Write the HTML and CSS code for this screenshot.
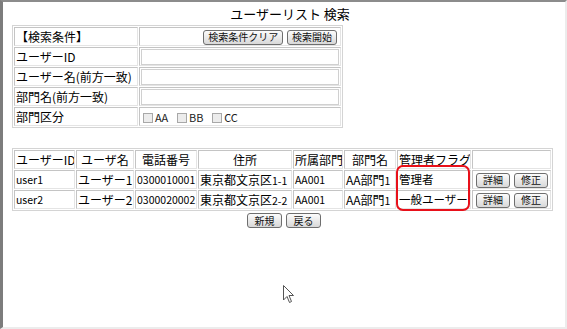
FILE: index.html
```html
<!DOCTYPE html>
<html lang="ja">
<head>
  <meta charset="UTF-8">
  <title>ユーザーリスト 検索</title>
  <link rel="stylesheet" href="styles.css">
</head>
<body>
  <div class="window">
    <h1 class="title">ユーザーリスト 検索</h1>

    <table class="grid search">
      <tr>
        <td class="label">【検索条件】</td>
        <td class="actions">
          <button class="btn">検索条件クリア</button>
          <button class="btn">検索開始</button>
        </td>
      </tr>
      <tr>
        <td class="label">ユーザーID</td>
        <td><input class="field" type="text"></td>
      </tr>
      <tr>
        <td class="label">ユーザー名(前方一致)</td>
        <td><input class="field" type="text"></td>
      </tr>
      <tr>
        <td class="label">部門名(前方一致)</td>
        <td><input class="field" type="text"></td>
      </tr>
      <tr>
        <td class="label">部門区分</td>
        <td class="checks">
          <label><span class="box"></span>AA</label>
          <label><span class="box"></span>BB</label>
          <label><span class="box"></span>CC</label>
        </td>
      </tr>
    </table>

    <div class="result-wrap">
      <table class="grid result">
        <tr>
          <th class="c-id">ユーザーID</th>
          <th class="c-name">ユーザ名</th>
          <th class="c-tel">電話番号</th>
          <th class="c-addr">住所</th>
          <th class="c-dept">所属部門</th>
          <th class="c-dname">部門名</th>
          <th class="c-flag">管理者フラグ</th>
          <th class="c-ops"></th>
        </tr>
        <tr>
          <td class="small">user1</td>
          <td>ユーザー1</td>
          <td class="small">0300010001</td>
          <td>東京都文京区<span class="small">1-1</span></td>
          <td class="small">AA001</td>
          <td>AA部門<span class="small">1</span></td>
          <td class="flag">管理者</td>
          <td class="ops"><button class="btn">詳細</button><button class="btn">修正</button></td>
        </tr>
        <tr>
          <td class="small">user2</td>
          <td>ユーザー2</td>
          <td class="small">0300020002</td>
          <td>東京都文京区<span class="small">2-2</span></td>
          <td class="small">AA001</td>
          <td>AA部門<span class="small">1</span></td>
          <td class="flag">一般ユーザー</td>
          <td class="ops"><button class="btn">詳細</button><button class="btn">修正</button></td>
        </tr>
      </table>
      <div class="highlight"></div>
    </div>

    <div class="footer">
      <button class="btn">新規</button>
      <button class="btn">戻る</button>
    </div>

    <svg class="cursor" width="12" height="19" viewBox="0 0 12 19">
      <path d="M0.5 0.5 L0.5 15 L4 11.5 L6.5 17.5 L8.5 16.5 L6 10.5 L10.5 10.5 Z" fill="#fff" stroke="#555" stroke-width="1"/>
    </svg>
  </div>
</body>
</html>
```

FILE: styles.css
```css
/* reset */
*,
*::before,
*::after {
  box-sizing: border-box;
}
body {
  margin: 0;
  background: #fff;
  font-family: "Noto Sans CJK JP", "Noto Sans", sans-serif;
  font-size: 12px;
  color: #000;
}
/* window */
.window {
  position: relative;
  height: 329px;
  border-top: 2px solid #8c8c8c;
  border-left: 3px solid #7c7c7c;
  border-right: 2px solid #ececec;
  border-bottom: 2px solid #ececec;
  padding: 0 9px;
}
.title {
  margin: 0;
  padding-left: 12px;
  height: 23px;
  line-height: 23px;
  font-size: 13px;
  font-weight: normal;
  text-align: center;
}
/* tables */
.grid {
  border: 1px solid #d4d4d4;
  border-spacing: 1px;
  table-layout: fixed;
}
.grid td,
.grid th {
  height: 19px;
  padding: 0 1px;
  border: 1px solid #c4c4c4;
  border-right-color: #e4e4e4;
  border-bottom-color: #e4e4e4;
  white-space: nowrap;
  overflow: hidden;
  line-height: 15px;
}
.search {
  width: 331px;
}
.search .label {
  width: 124px;
  font-size: 12px;
}
.search .actions {
  text-align: right;
  padding-right: 3px;
}
.field {
  display: block;
  width: 100%;
  height: 16px;
  margin: 0;
  border: 1px solid #d0d0d0;
  background: #fff;
}
.checks label {
  margin-right: 4px;
  font-size: 11px;
  color: #222;
}
.box {
  display: inline-block;
  width: 10px;
  height: 10px;
  margin: 0 2px 0 2px;
  vertical-align: -1px;
  border: 1px solid #a8a8a8;
  background: #ececec;
}
/* buttons */
.btn {
  height: 15px;
  margin: 0 0 0 1px;
  padding: 0 4px;
  font-family: "Noto Sans CJK JP", sans-serif;
  font-size: 10px;
  line-height: 12px;
  color: #111;
  background: linear-gradient(#fcfcfc, #d8d8d8);
  border: 1px solid #6e6e6e;
  border-radius: 3px;
}
/* results */
.result-wrap {
  position: relative;
  margin-top: 20px;
  width: 541px;
}
.result {
  width: 541px;
}
.result th {
  font-weight: normal;
  font-size: 12px;
  text-align: center;
}
.c-id { width: 61px; }
.c-name { width: 58px; }
.c-tel { width: 62px; }
.c-addr { width: 94px; }
.c-dept { width: 50px; }
.c-dname { width: 52px; }
.c-flag { width: 74px; }
.c-ops { width: 79px; }
.result th.c-flag,
.result th.c-dept,
.result th.c-id {
  text-align: left;
}
.result td {
  font-size: 12px;
}
.result .small {
  font-size: 10.5px;
}
.result td.flag {
  font-size: 11.5px;
}
.ops {
  text-align: center;
}
.ops .btn {
  width: 34px;
  margin: 0 2px;
  padding: 0;
}
.highlight {
  position: absolute;
  left: 384px;
  top: 17px;
  width: 74px;
  height: 46px;
  border: 2px solid #e8101a;
  border-radius: 7px;
}
.footer {
  display: flex;
  justify-content: center;
  gap: 4px;
  width: 541px;
  margin-top: 2px;
  padding-left: 3px;
}
.footer .btn {
  width: 35px;
  margin: 0;
  padding: 0;
}
.cursor {
  position: absolute;
  left: 280px;
  top: 283px;
}
```
